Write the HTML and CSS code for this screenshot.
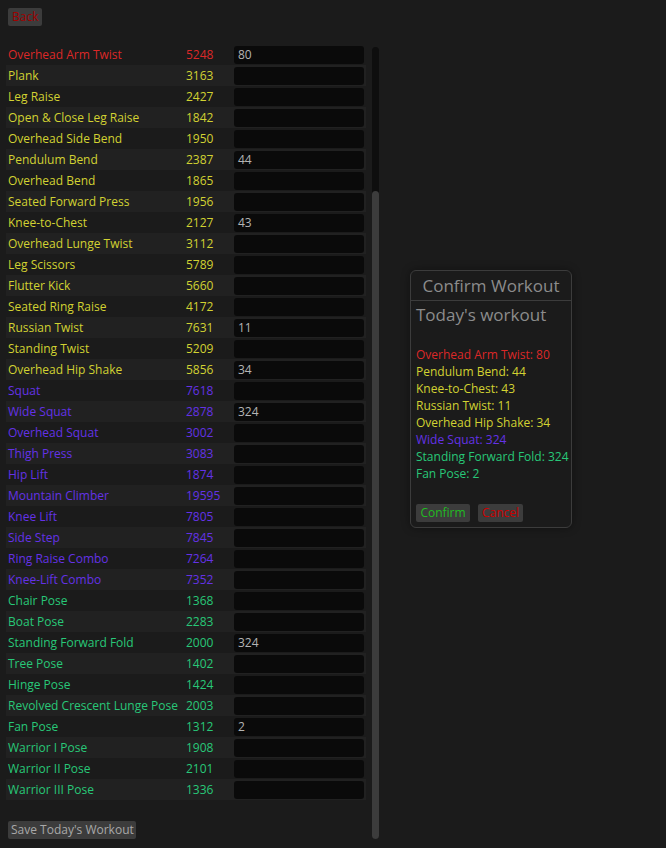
FILE: index.html
```html
<!DOCTYPE html>
<html>
<head>
<meta charset="utf-8">
<link rel="stylesheet" href="styles.css">
</head>
<body>
<div class="page">
  <div class="top"><button class="btn back">Back</button></div>
  <div class="main">
    <div class="listcol">
      <div class="rows">
        <div class="row red"><span class="name">Overhead Arm Twist</span><span class="num">5248</span><span class="inp">80</span></div>
        <div class="row yel"><span class="name">Plank</span><span class="num">3163</span><span class="inp"></span></div>
        <div class="row yel"><span class="name">Leg Raise</span><span class="num">2427</span><span class="inp"></span></div>
        <div class="row yel"><span class="name">Open &amp; Close Leg Raise</span><span class="num">1842</span><span class="inp"></span></div>
        <div class="row yel"><span class="name">Overhead Side Bend</span><span class="num">1950</span><span class="inp"></span></div>
        <div class="row yel"><span class="name">Pendulum Bend</span><span class="num">2387</span><span class="inp">44</span></div>
        <div class="row yel"><span class="name">Overhead Bend</span><span class="num">1865</span><span class="inp"></span></div>
        <div class="row yel"><span class="name">Seated Forward Press</span><span class="num">1956</span><span class="inp"></span></div>
        <div class="row yel"><span class="name">Knee-to-Chest</span><span class="num">2127</span><span class="inp">43</span></div>
        <div class="row yel"><span class="name">Overhead Lunge Twist</span><span class="num">3112</span><span class="inp"></span></div>
        <div class="row yel"><span class="name">Leg Scissors</span><span class="num">5789</span><span class="inp"></span></div>
        <div class="row yel"><span class="name">Flutter Kick</span><span class="num">5660</span><span class="inp"></span></div>
        <div class="row yel"><span class="name">Seated Ring Raise</span><span class="num">4172</span><span class="inp"></span></div>
        <div class="row yel"><span class="name">Russian Twist</span><span class="num">7631</span><span class="inp">11</span></div>
        <div class="row yel"><span class="name">Standing Twist</span><span class="num">5209</span><span class="inp"></span></div>
        <div class="row yel"><span class="name">Overhead Hip Shake</span><span class="num">5856</span><span class="inp">34</span></div>
        <div class="row pur"><span class="name">Squat</span><span class="num">7618</span><span class="inp"></span></div>
        <div class="row pur"><span class="name">Wide Squat</span><span class="num">2878</span><span class="inp">324</span></div>
        <div class="row pur"><span class="name">Overhead Squat</span><span class="num">3002</span><span class="inp"></span></div>
        <div class="row pur"><span class="name">Thigh Press</span><span class="num">3083</span><span class="inp"></span></div>
        <div class="row pur"><span class="name">Hip Lift</span><span class="num">1874</span><span class="inp"></span></div>
        <div class="row pur"><span class="name">Mountain Climber</span><span class="num">19595</span><span class="inp"></span></div>
        <div class="row pur"><span class="name">Knee Lift</span><span class="num">7805</span><span class="inp"></span></div>
        <div class="row pur"><span class="name">Side Step</span><span class="num">7845</span><span class="inp"></span></div>
        <div class="row pur"><span class="name">Ring Raise Combo</span><span class="num">7264</span><span class="inp"></span></div>
        <div class="row pur"><span class="name">Knee-Lift Combo</span><span class="num">7352</span><span class="inp"></span></div>
        <div class="row grn"><span class="name">Chair Pose</span><span class="num">1368</span><span class="inp"></span></div>
        <div class="row grn"><span class="name">Boat Pose</span><span class="num">2283</span><span class="inp"></span></div>
        <div class="row grn"><span class="name">Standing Forward Fold</span><span class="num">2000</span><span class="inp">324</span></div>
        <div class="row grn"><span class="name">Tree Pose</span><span class="num">1402</span><span class="inp"></span></div>
        <div class="row grn"><span class="name">Hinge Pose</span><span class="num">1424</span><span class="inp"></span></div>
        <div class="row grn"><span class="name">Revolved Crescent Lunge Pose</span><span class="num">2003</span><span class="inp"></span></div>
        <div class="row grn"><span class="name">Fan Pose</span><span class="num">1312</span><span class="inp">2</span></div>
        <div class="row grn"><span class="name">Warrior I Pose</span><span class="num">1908</span><span class="inp"></span></div>
        <div class="row grn"><span class="name">Warrior II Pose</span><span class="num">2101</span><span class="inp"></span></div>
        <div class="row grn"><span class="name">Warrior III Pose</span><span class="num">1336</span><span class="inp"></span></div>
      </div>
      <div class="savewrap"><button class="btn save">Save Today's Workout</button></div>
    </div>
    <div class="scrollbar"><div class="thumb"></div></div>
  </div>
</div>

<div class="dialog">
  <div class="dtitle">Confirm Workout</div>
  <div class="dbody">
    <div class="dhead">Today's workout</div>
    <div class="ditems">
      <div class="red">Overhead Arm Twist: 80</div>
      <div class="yel">Pendulum Bend: 44</div>
      <div class="yel">Knee-to-Chest: 43</div>
      <div class="yel">Russian Twist: 11</div>
      <div class="yel">Overhead Hip Shake: 34</div>
      <div class="pur">Wide Squat: 324</div>
      <div class="grn">Standing Forward Fold: 324</div>
      <div class="grn">Fan Pose: 2</div>
    </div>
    <div class="dbtns">
      <button class="btn confirm">Confirm</button>
      <button class="btn cancel">Cancel</button>
    </div>
  </div>
</div>
</body>
</html>
```

FILE: styles.css
```css
html, body {
  margin: 0;
  padding: 0;
  background: #1b1b1b;
  height: 100%;
  overflow: hidden;
}
body {
  font-family: "Open Sans", "Noto Sans", sans-serif;
  font-size: 12px;
  color: #8c8c8c;
}
.page {
  padding: 8px;
}
.btn {
  font-family: inherit;
  font-size: 12px;
  border: none;
  background: #3c3c3c;
  border-radius: 2px;
  height: 18px;
  padding: 0 4px;
  line-height: 18px;
  margin: 0;
  display: block;
  white-space: nowrap;
}
.back {
  color: #a00000;
  width: 34px;
}
.top {
  height: 18px;
}
.main {
  display: flex;
  margin-top: 18px;
  margin-left: -2px;
  gap: 6px;
}
.listcol {
  width: 360px;
  display: flex;
  flex-direction: column;
}
.rows {
  display: flex;
  flex-direction: column;
}
.row {
  display: flex;
  align-items: center;
  height: 21px;
  padding-left: 2px;
}
.row:nth-child(even) {
  background: #212121;
}
.name {
  width: 178px;
  white-space: nowrap;
}
.num {
  width: 48px;
}
.inp {
  width: 126px;
  height: 18px;
  line-height: 18px;
  background: #0a0a0a;
  border-radius: 3px;
  color: #b4b4b4;
  padding-left: 4px;
  box-sizing: content-box;
}
.red { color: #dc2828; }
.yel { color: #d2d232; }
.pur { color: #6432e6; }
.grn { color: #28c878; }
.savewrap {
  margin-top: 21px;
  padding-left: 2px;
}
.save {
  color: #a8a8a8;
  width: 128px;
  padding: 0 3px;
}
.scrollbar {
  width: 7px;
  margin-top: 3px;
  background: #0e0e0e;
  border-radius: 4px;
  display: flex;
  flex-direction: column;
  justify-content: flex-end;
}
.thumb {
  height: 648px;
  background: #3c3c3c;
  border-radius: 4px;
}
.dialog {
  position: absolute;
  left: 410px;
  top: 270px;
  width: 160px;
  height: 256px;
  border: 1px solid #3c3c3c;
  border-radius: 6px;
  background: #1b1b1b;
  box-shadow: 0 0 8px rgba(0,0,0,0.4);
}
.dtitle {
  height: 29px;
  line-height: 29px;
  text-align: center;
  font-size: 17px;
  color: #8c8c8c;
  border-bottom: 1px solid #3c3c3c;
}
.dbody {
  padding: 0 5px;
}
.dhead {
  font-size: 17px;
  margin-top: 3px;
  line-height: 22px;
  color: #8c8c8c;
}
.ditems {
  margin-top: 20px;
  display: flex;
  flex-direction: column;
}
.ditems div {
  height: 17px;
  line-height: 17px;
  white-space: nowrap;
}
.dbtns {
  display: flex;
  gap: 8px;
  margin-top: 22px;
}
.confirm {
  color: #22bb22;
  width: 54px;
}
.cancel {
  color: #cc0000;
  width: 45px;
}
```
